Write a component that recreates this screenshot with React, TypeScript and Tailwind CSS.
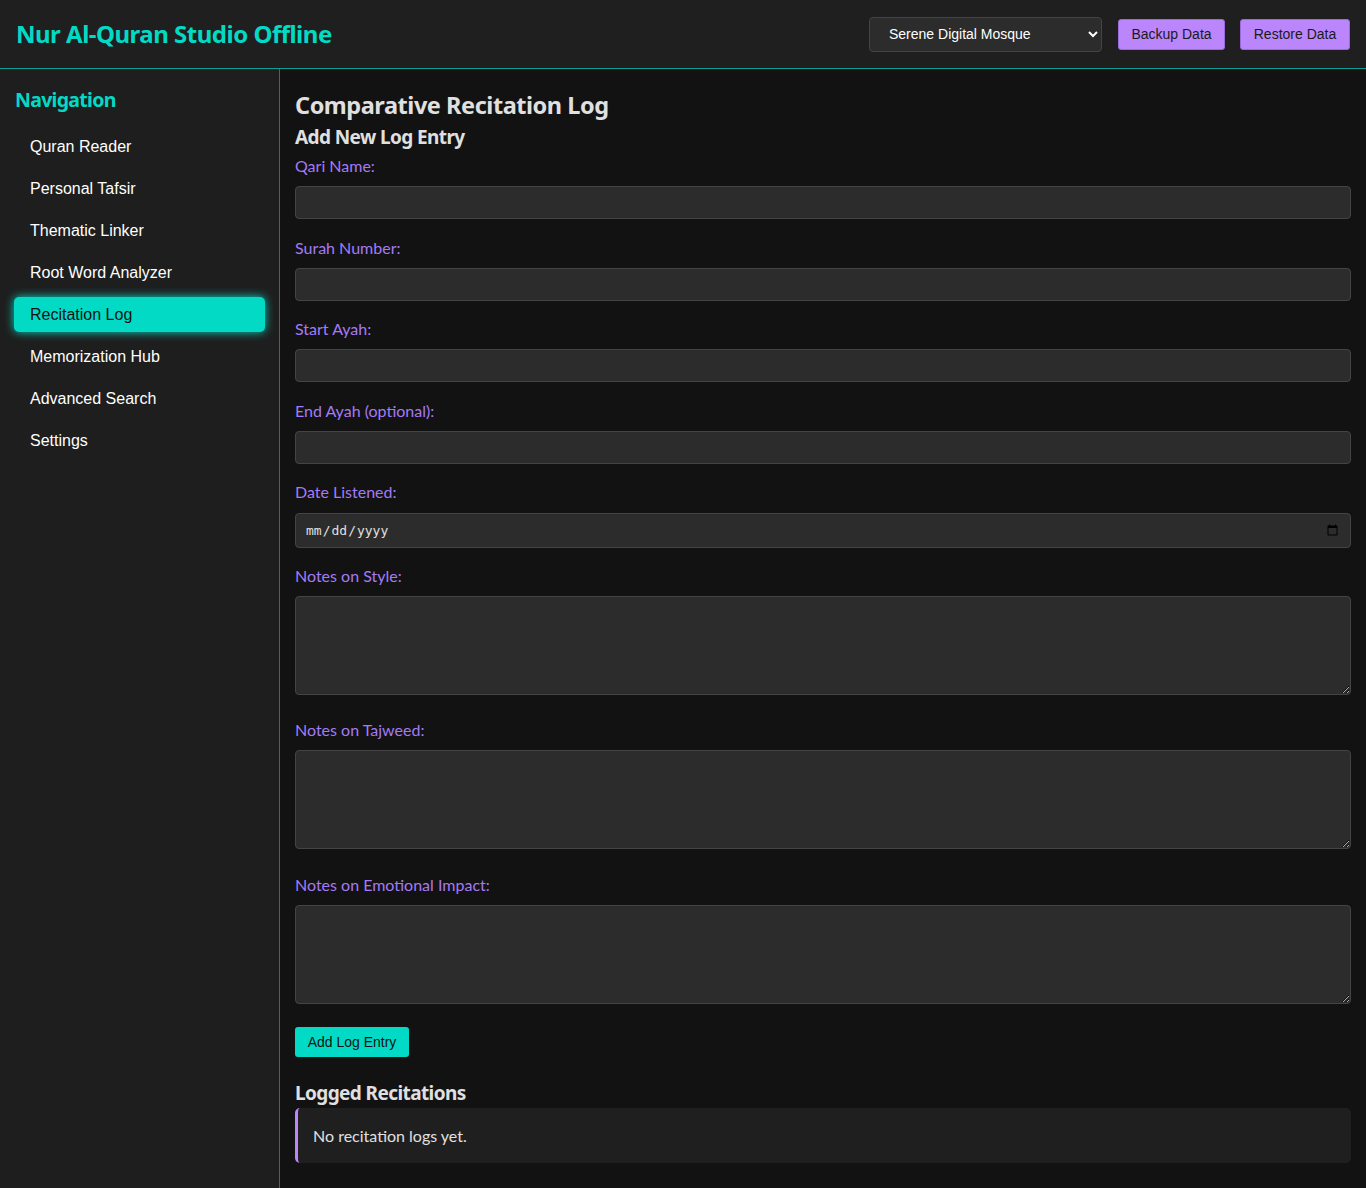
import { useState } from 'react'

const navItems = [
  'Quran Reader',
  'Personal Tafsir',
  'Thematic Linker',
  'Root Word Analyzer',
  'Recitation Log',
  'Memorization Hub',
  'Advanced Search',
  'Settings',
]

const heading = { fontFamily: '"Noto Sans", "Open Sans", sans-serif' }
const body = { fontFamily: 'Lato, "Noto Sans", sans-serif' }
const arial = { fontFamily: '"Liberation Sans", Arial, sans-serif' }

function Field({ label, gap = 'mb-[18.5px]', labelGap = 'mb-[10px]', children }: { label: string; gap?: string; labelGap?: string; children: React.ReactNode }) {
  return (
    <div className={gap}>
      <label className={`block text-[16px] leading-[20px] text-[#a57af5] ${labelGap}`} style={body}>{label}</label>
      {children}
    </div>
  )
}

export default function App() {
  const [active, setActive] = useState('Recitation Log')
  const inputCls = 'block w-full h-[33px] bg-[#2c2c2c] border border-[#444] rounded-[4px] px-2 text-[#e0e0e0] outline-none'
  const areaCls = 'block w-full h-[99px] bg-[#2c2c2c] border border-[#444] rounded-[4px] px-2 py-1 text-[#e0e0e0] outline-none'

  return (
    <div className="min-h-screen flex flex-col bg-[#121212] text-[#e0e0e0]">
      <header className="h-[69px] shrink-0 flex items-center justify-between pl-4 pr-4 bg-[#1f1f1f] border-b border-[#03dac6]/70">
        <h1 className="text-[24px] font-bold text-[#03dac6] tracking-[-0.5px]" style={heading}>Nur Al-Quran Studio Offline</h1>
        <div className="flex items-center">
          <select className="w-[233px] h-[35px] bg-[#2c2c2c] border border-[#444] rounded-[4px] pl-[15px] pr-2 text-[14px] text-white mr-[16px]" style={arial} defaultValue="serene">
            <option value="serene">Serene Digital Mosque</option>
            <option value="dark">Classic Dark</option>
          </select>
          <button className="h-[31px] w-[107px] bg-[#bb86fc] border border-[#9a6ad8] rounded-[3px] text-[14px] text-[#1a1a1a] mr-[15px]" style={arial}>Backup Data</button>
          <button className="h-[31px] w-[110px] bg-[#bb86fc] border border-[#9a6ad8] rounded-[3px] text-[14px] text-[#1a1a1a]" style={arial}>Restore Data</button>
        </div>
      </header>

      <div className="flex flex-1">
        <aside className="w-[280px] shrink-0 bg-[#1e1e1e] border-r border-[#03dac6]/50 px-[14px] pt-[16px]">
          <h2 className="text-[19.5px] font-bold text-[#03dac6] tracking-[-0.7px] pl-[1px] mb-[15px]" style={heading}>Navigation</h2>
          <nav className="flex flex-col gap-[7px]">
            {navItems.map(item => (
              <button
                key={item}
                onClick={() => setActive(item)}
                className={`h-[35px] text-left pl-[16px] rounded-[5px] text-[16px] ${active === item ? 'bg-[#03dac6] text-[#121212] shadow-[0_0_10px_#03dac6]' : 'text-white'}`}
                style={arial}
              >
                {item}
              </button>
            ))}
          </nav>
        </aside>

        <main className="flex-1 px-[15px] pt-[20px] pb-[23px]" style={body}>
          <h2 className="text-[23.5px] font-bold leading-[32px] tracking-[-0.45px] text-[#e0e0e0]" style={heading}>Comparative Recitation Log</h2>
          <h3 className="mt-[3px] text-[19px] font-bold leading-[26px] tracking-[-0.6px] text-[#e0e0e0] mb-[6px]" style={heading}>Add New Log Entry</h3>

          <Field label="Qari Name:"><input type="text" className={inputCls} /></Field>
          <Field label="Surah Number:"><input type="number" className={inputCls} /></Field>
          <Field label="Start Ayah:"><input type="number" className={inputCls} /></Field>
          <Field label="End Ayah (optional):"><input type="number" className={inputCls} /></Field>
          <Field label="Date Listened:" gap="mb-[18px]" labelGap="mb-[11px]">
            <input type="date" className="block w-full h-[35px] bg-[#2c2c2c] border border-[#444] rounded-[4px] px-[9px] text-[13px] text-[#e0e0e0] outline-none" style={{ fontFamily: '"DejaVu Sans Mono", monospace' }} />
          </Field>
          <Field label="Notes on Style:" gap="mb-[25px]"><textarea className={areaCls} /></Field>
          <Field label="Notes on Tajweed:" gap="mb-[26px]"><textarea className={areaCls} /></Field>
          <Field label="Notes on Emotional Impact:" gap="mb-[23px]"><textarea className={areaCls} /></Field>

          <button className="h-[30px] w-[114px] bg-[#03dac6] rounded-[3px] text-[14px] text-[#121212]" style={arial}>Add Log Entry</button>

          <h3 className="mt-[23px] text-[19px] font-bold leading-[26px] tracking-[-0.6px] text-[#e0e0e0] mb-[2px]" style={heading}>Logged Recitations</h3>
          <div className="bg-[#1f1f1f] border-l-[3px] border-[#bb86fc] rounded-[5px] h-[55px] flex items-center pl-[15px] text-[16px] text-[#e0e0e0]">
            No recitation logs yet.
          </div>
        </main>
      </div>
    </div>
  )
}
